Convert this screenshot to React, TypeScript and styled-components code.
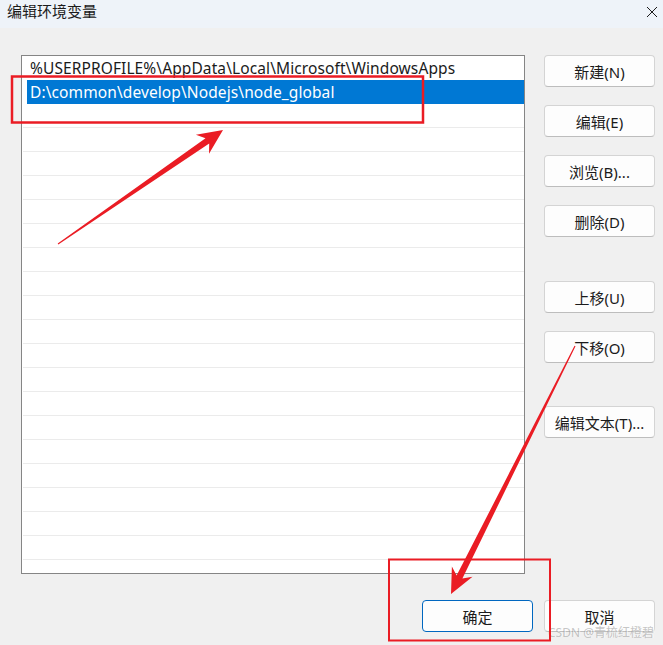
import styled, { createGlobalStyle } from "styled-components";

const GlobalStyle = createGlobalStyle`
  html, body { margin: 0; padding: 0; }
  body {
    background-color: #f0f0f0;
    font-family: "Segoe UI", "Noto Sans", "Noto Sans CJK SC", sans-serif;
    color: #1b1b1b;
  }
`;

const Window = styled.div`
  position: relative;
  width: 663px;
  height: 645px;
  background-color: #f0f0f0;
  overflow: hidden;
`;

const TitleBar = styled.header`
  height: 28px;
  display: flex;
  align-items: flex-start;
  justify-content: space-between;
  background-color: #eef3f9;
  padding: 1px 5px 0 7px;
  box-sizing: border-box;
`;

const Title = styled.h1`
  margin: 0;
  font-size: 15px;
  font-weight: 400;
  line-height: 20px;
  font-family: "Noto Sans CJK SC", sans-serif;
`;

const Close = styled.svg`
  margin-top: 5px;
  width: 12px;
  height: 12px;
`;

const Body = styled.div`
  display: grid;
  grid-template-columns: 504px 111px;
  column-gap: 19px;
  padding: 27px 0 0 21px;
`;

const List = styled.div`
  height: 519px;
  box-sizing: border-box;
  border: 1px solid #858585;
  background-color: #ffffff;
  padding: 0 0 0 1px;
`;

const Row = styled.div<{ $empty?: boolean }>`
  height: 24px;
  box-sizing: border-box;
  display: flex;
  ${(p) => p.$empty && "border-bottom: 1px solid #ebebeb;"}
`;

const Cell = styled.span<{ $selected?: boolean }>`
  flex: 1;
  margin-left: 4px;
  padding-left: 3px;
  line-height: 24px;
  font-size: 15.5px;
  letter-spacing: 0.1px;
  white-space: nowrap;
  ${(p) => p.$selected && "background-color: #0078d4; color: #ffffff;"}
`;

const Side = styled.div`
  display: flex;
  flex-direction: column;
`;

const Button = styled.button<{ $gap?: number; $primary?: boolean }>`
  width: 111px;
  height: 32px;
  margin-top: ${(p) => p.$gap ?? 0}px;
  box-sizing: border-box;
  background-color: #fdfdfd;
  border: 1px solid ${(p) => (p.$primary ? "#0067c0" : "#d4d4d4")};
  border-bottom-color: ${(p) => (p.$primary ? "#0067c0" : "#bdbdbd")};
  border-radius: 4px;
  font-family: "Segoe UI", "Noto Sans", "Noto Sans CJK SC", sans-serif;
  font-size: 15px;
  color: #1b1b1b;
  padding: 0;
`;

const Footer = styled.div`
  display: flex;
  justify-content: flex-end;
  gap: 11px;
  padding: 26px 8px 0 0;
`;

const Overlay = styled.svg`
  position: absolute;
  left: 0;
  top: 0;
  width: 663px;
  height: 645px;
  pointer-events: none;
`;

const Watermark = styled.span`
  position: absolute;
  left: 548px;
  top: 627px;
  font-size: 12px;
  line-height: 12px;
  font-family: "Noto Sans", "Noto Sans CJK SC", sans-serif;
  color: rgba(150, 150, 150, 0.55);
  text-shadow: 1px 0 0 rgba(255, 255, 255, 0.7);
  white-space: nowrap;
`;

const paths = [
  "%USERPROFILE%\\AppData\\Local\\Microsoft\\WindowsApps",
  "D:\\common\\develop\\Nodejs\\node_global",
];

const side = [
  { label: "新建(N)", gap: 0 },
  { label: "编辑(E)", gap: 18 },
  { label: "浏览(B)...", gap: 18 },
  { label: "删除(D)", gap: 18 },
  { label: "上移(U)", gap: 44 },
  { label: "下移(O)", gap: 18 },
  { label: "编辑文本(T)...", gap: 43 },
];

function arrow(tx: number, ty: number, hx: number, hy: number) {
  const dx = hx - tx;
  const dy = hy - ty;
  const len = Math.hypot(dx, dy);
  const ux = dx / len;
  const uy = dy / len;
  const px = -uy;
  const py = ux;
  const pt = (d: number, w: number) =>
    `${(hx - ux * d + px * w).toFixed(1)},${(hy - uy * d + py * w).toFixed(1)}`;
  return [
    pt(len, 0.6),
    pt(19, 3.2),
    pt(25, 11.5),
    pt(0, 0),
    pt(25, -11.5),
    pt(19, -3.2),
    pt(len, -0.6),
  ].join(" ");
}

export default function App() {
  const rows = Array.from({ length: 21 }, (_, i) => paths[i] ?? "");
  return (
    <Window>
      <GlobalStyle />
      <TitleBar>
        <Title>编辑环境变量</Title>
        <Close viewBox="0 0 12 12">
          <path d="M1 1 L11 11 M11 1 L1 11" stroke="#1b1b1b" strokeWidth="1" fill="none" />
        </Close>
      </TitleBar>
      <Body>
        <List>
          {rows.map((p, i) => (
            <Row key={i} $empty={p === ""}>
              <Cell $selected={i === 1}>{p}</Cell>
            </Row>
          ))}
        </List>
        <Side>
          {side.map((b) => (
            <Button key={b.label} $gap={b.gap}>{b.label}</Button>
          ))}
        </Side>
      </Body>
      <Footer>
        <Button $primary>确定</Button>
        <Button>取消</Button>
      </Footer>
      <Watermark>CSDN @青梳红橙碧</Watermark>
      <Overlay viewBox="0 0 663 645">
        <rect x="12" y="76.5" width="411" height="46" fill="none" stroke="#ea1c24" strokeWidth="2.5" />
        <rect x="389" y="559.5" width="161" height="81" fill="none" stroke="#ea1c24" strokeWidth="2" />
        <polygon points={arrow(58, 244, 223, 130)} fill="#ea1c24" />
        <polygon points={arrow(575, 346, 451, 594)} fill="#ea1c24" />
      </Overlay>
    </Window>
  );
}
